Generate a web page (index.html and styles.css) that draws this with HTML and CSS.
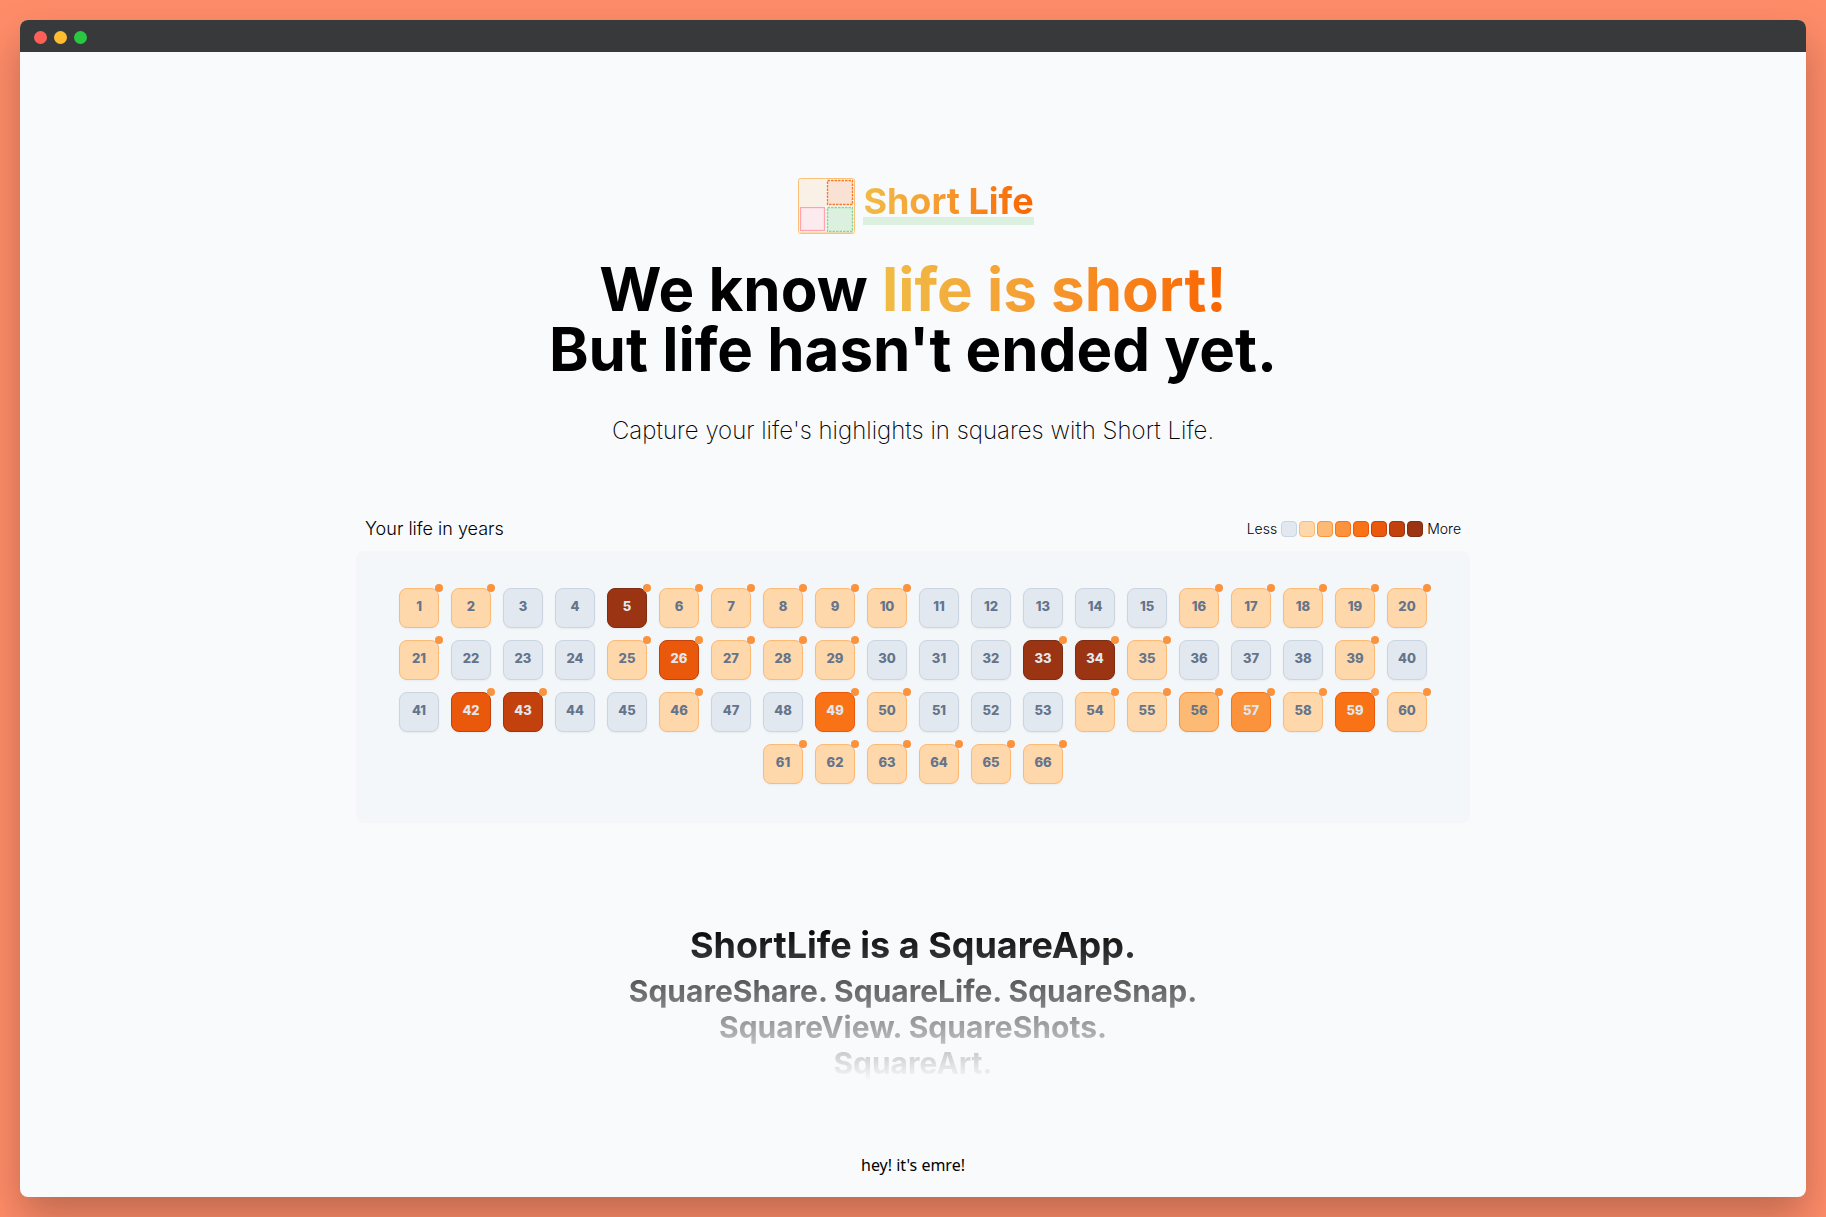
FILE: index.html
```html
<!DOCTYPE html>
<html lang="en">
<head>
<meta charset="utf-8">
<title>Short Life</title>
<link rel="stylesheet" href="styles.css">
</head>
<body>
<div class="window">
  <div class="titlebar">
    <span class="light red"></span><span class="light yellow"></span><span class="light green"></span>
  </div>
  <main class="page">
    <a class="brand" href="#">
      <svg class="logo" width="57" height="56" viewBox="0 0 57 56" fill="none" aria-hidden="true">
        <rect x=".5" y=".5" width="56" height="55" rx="2" fill="#faf1e6" stroke="#fdc078"/>
        <path d="M1 28h28v27H1zM28 1h28v54H28z" fill="#fdf8f2"/>
        <path d="M1.500 54.500h54" stroke="#fddcb4"/>
        <rect x="29.500" y="2.500" width="25" height="24" fill="#f9e2d4" stroke="#f47a2c" stroke-width="1.400" stroke-dasharray="2.500 1"/>
        <rect x="2.500" y="29.500" width="24" height="23" fill="#fbeaee" stroke="#fda4af" stroke-width="1.300"/>
        <rect x="29.500" y="29.500" width="25" height="24" fill="#dcf0e0" stroke="#86d69a" stroke-width="1.400" stroke-dasharray="2.500 1"/>
      </svg>
      <span class="brand-name"><span class="gradient">Short Life</span></span>
    </a>
    <h1>We know <span class="gradient">life is short!</span><br>But life hasn't ended yet.</h1>
    <p class="tagline">Capture your life's highlights in squares with Short Life.</p>
    <section class="years">
      <div class="years-head">
        <h2>Your life in years</h2>
        <div class="legend">
          <span>Less</span>
          <span class="swatches" id="swatches"></span>
          <span>More</span>
        </div>
      </div>
      <div class="panel" id="grid"></div>
    </section>
    <section class="names">
      <h2>ShortLife is a SquareApp.</h2>
      <p>SquareShare. SquareLife. SquareSnap.<br>SquareView. SquareShots.<br>SquareArt.</p>
    </section>
    <footer>hey! it's emre!</footer>
  </main>
</div>
<script src="main.js"></script>
</body>
</html>
```
FILE: main.js
```js
// One digit per year: 0 is an empty year, 1-7 go from few to many events.
const levels =
  "11007111110000011111" +
  "10001511100077100010" +
  "05600100410001123141" +
  "111111";

const grid = document.getElementById("grid");
[...levels].forEach((level, i) => {
  const year = document.createElement("button");
  year.type = "button";
  year.className = "year level-" + level + (level > 0 ? " marked" : "");
  year.textContent = i + 1;
  grid.append(year);
});

const swatches = document.getElementById("swatches");
for (let level = 0; level < 8; level++) {
  const swatch = document.createElement("i");
  swatch.className = "swatch level-" + level;
  swatches.append(swatch);
}
```
FILE: styles.css
```css
* { box-sizing: border-box; }
body {
  margin: 0;
  padding: 20px;
  min-height: 100vh;
  display: flex;
  background: #ff8c69;
  font-family: Inter, "Liberation Sans", sans-serif;
  color: #000;
}
h1, h2, p { margin: 0; }
.window {
  flex: 1;
  display: flex;
  flex-direction: column;
  border-radius: 8px;
  overflow: hidden;
  background: #f9fafc;
  box-shadow: 0 20px 40px rgba(0, 0, 0, .25);
}
.titlebar {
  display: flex;
  align-items: center;
  gap: 7px;
  height: 32px;
  padding: 2px 14px 0;
  background: #38393a;
}
.light { width: 13px; height: 13px; border-radius: 50%; }
.red { background: #ff5f57; }
.yellow { background: #febc2e; }
.green { background: #28c840; }
.page {
  flex: 1;
  display: flex;
  flex-direction: column;
  align-items: center;
  padding: 126px 20px 16px;
}
.gradient {
  background: linear-gradient(to right, #f0bc46, #f5a034 40%, #fa6400);
  -webkit-background-clip: text;
  background-clip: text;
  color: transparent;
}
.brand {
  display: flex;
  align-items: flex-start;
  gap: 8px;
  padding-left: 6px;
  text-decoration: none;
}
.brand-name {
  margin-top: 3px;
  height: 44px;
  border-bottom: 8px solid #dcf0e0;
  font-size: 36px;
  line-height: 40px;
  font-weight: 700;
}
.logo { display: block; }
h1 {
  margin-top: 25px;
  font-size: 60px;
  line-height: 60px;
  font-weight: 700;
  text-align: center;
}
.tagline {
  margin-top: 36px;
  font-size: 24px;
  line-height: 32px;
  font-weight: 200;
}
.years { width: 100%; max-width: 1114px; margin-top: 68px; }
.years-head {
  display: flex;
  align-items: center;
  justify-content: space-between;
  padding: 0 9px 8px;
}
.years-head h2 { font-size: 18px; line-height: 28px; font-weight: 300; }
.legend {
  display: flex;
  align-items: center;
  gap: 4px;
  font-size: 14px;
  line-height: 20px;
  font-weight: 300;
}
.swatches { display: flex; gap: 2px; }
.swatch { width: 16px; height: 16px; border: 1px solid; border-radius: 4px; }
.panel {
  display: flex;
  flex-wrap: wrap;
  justify-content: center;
  gap: 12px;
  padding: 33px 36px 35px;
  border: 4px solid #f4f6f9;
  border-radius: 8px;
  background: #f3f7fa;
}
.year {
  position: relative;
  width: 40px;
  height: 40px;
  padding: 0 0 4px;
  border: 1px solid;
  border-radius: 8px;
  font: 800 13px/20px Inter, sans-serif;
  box-shadow: 0 1px 2px rgba(0, 0, 0, .05);
}
.marked::after {
  content: "";
  position: absolute;
  top: -5px;
  right: -5px;
  width: 8px;
  height: 8px;
  border-radius: 50%;
  background: #fb923c;
}
.level-0 { background: #e2e8f0; border-color: #cbd5e1; color: #64748b; }
.level-1 { background: #fed7aa; border-color: #fdba74; color: #64748b; }
.level-2 { background: #fdba74; border-color: #fb923c; color: #64748b; }
.level-3 { background: #fb923c; border-color: #f97316; color: #e2e8f0; }
.level-4 { background: #f97316; border-color: #ea580c; color: #e2e8f0; }
.level-5 { background: #ea580c; border-color: #c2410c; color: #e2e8f0; }
.level-6 { background: #c2410c; border-color: #9a3412; color: #e2e8f0; }
.level-7 { background: #9a3412; border-color: #7c2d12; color: #e2e8f0; }
.names {
  margin-top: 102px;
  text-align: center;
  font-weight: 700;
  background: linear-gradient(to bottom, #000, #f9fafc);
  -webkit-background-clip: text;
  background-clip: text;
  color: transparent;
}
.names h2 { font-size: 36px; line-height: 40px; }
.names p { margin-top: 8px; font-size: 30px; line-height: 36px; }
footer {
  margin-top: 72px;
  font: 16px/24px "Noto Sans", sans-serif;
}
```
